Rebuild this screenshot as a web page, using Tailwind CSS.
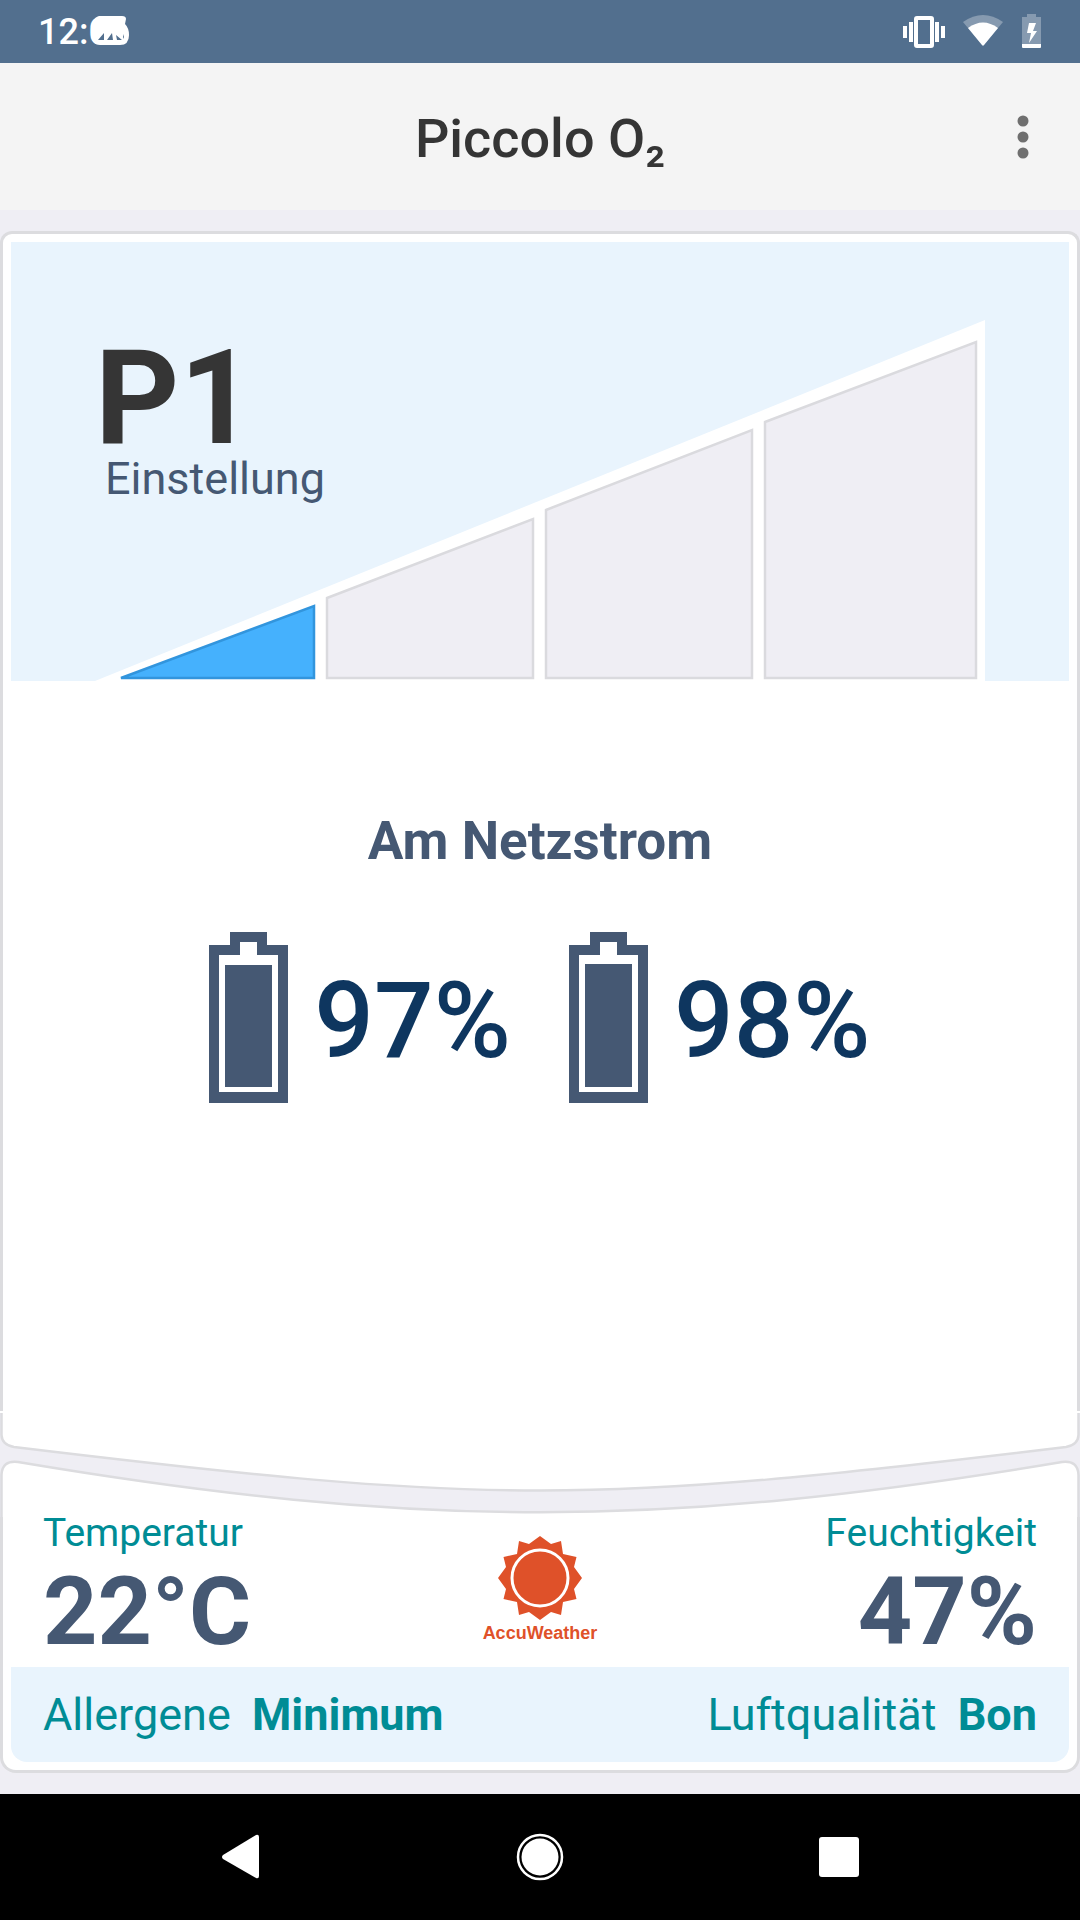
<!DOCTYPE html>
<html lang="de"><head>
<meta charset="utf-8"/>
<meta content="width=device-width, initial-scale=1.0" name="viewport"/>
<title>Piccolo O₂</title>
<script src="https://cdn.jsdelivr.net/npm/@tailwindcss/browser@4"></script>
<style>
        body {
            font-family: Roboto, sans-serif;
        }
    </style>
</head>
<body class="bg-[#efeef4] min-h-screen flex flex-col">

<!-- Status bar -->
<div class="h-[63px] shrink-0 bg-[#526f8e] text-white flex items-center justify-between pl-[38px] pr-[38px]">
<div class="relative text-[36px] leading-[64px] pt-px font-medium">
12:06
<svg class="absolute left-[52px] top-[15px] w-10 h-8" viewBox="0 0 40 32">
<path d="M9 2H32Q36 2 36 5L35 10Q39 14 39 21Q39 31 30 31H10Q1 31 1 18Q1 4 9 2Z" fill="#fff"/>
<path d="M14 19V26H8ZM22 19L23 26H17ZM26 21L32 26H27ZM34 20V25L33 23Z" fill="#526f8e"/>
</svg>
</div>
<div class="flex items-center">
<svg class="w-11 h-9" viewBox="0 0 44 36" fill="currentColor">
<rect x="1" y="12" width="4" height="12"/><rect x="7" y="8" width="4" height="20"/>
<rect x="33" y="8" width="4" height="20"/><rect x="39" y="12" width="4" height="12"/>
<rect x="14" y="4" width="16" height="28" rx="1" fill="none" stroke="currentColor" stroke-width="4"/>
</svg>
<svg class="w-[42px] h-9 ml-4" viewBox="0 0 42 36" fill="currentColor">
<path d="M1 8Q21 -6 41 8L21 32Z" opacity=".3"/>
<path d="M6 14Q21 3 36 14L22 31Q21 32 20 31Z"/>
</svg>
<svg class="w-5 h-9 ml-[18px]" viewBox="0 0 20 36" fill="currentColor">
<path d="M5 0H14V3H19V30H0V3H5Z" opacity=".3"/>
<path d="M0 30H19V33Q19 34 18 34H1Q0 34 0 33Z"/>
<path d="M7 9H14L11 17H15L7 29L9 19H5Z"/>
</svg>
</div>
</div>

<!-- App bar -->
<header class="h-[147px] shrink-0 bg-[#f4f4f4] grid grid-cols-[80px_1fr_80px] items-center">
<h1 class="col-start-2 text-center text-[54px] leading-[64px] pt-1 font-medium text-[#353535]">Piccolo O₂</h1>
<button type="button" aria-label="Menü" class="h-12 w-[46px] flex items-center justify-center">
<svg class="w-4 h-11" viewBox="0 0 16 44" fill="#6f6f6f">
<circle cx="8" cy="6" r="5.5"/><circle cx="8" cy="22" r="5.5"/><circle cx="8" cy="38" r="5.5"/>
</svg>
</button>
</header>

<main class="grow flex flex-col mt-[21px] mb-[21px]">
<section class="grow bg-white border-[3px] border-b-0 border-[#dcdcdf] rounded-t-xl px-2 pt-2">

<!-- Level chart -->
<div class="grid bg-[#e9f4fd]">
<svg class="col-start-1 row-start-1 w-full h-auto" viewBox="0 0 1058 439">
<path d="M84 439L974 78V439Z" fill="#fff"/>
<g fill="#efeef4" stroke="#dadade" stroke-width="2.500">
<path d="M110 436L303 364V436Z" fill="#45b1fd" stroke="#3295dd"/>
<path d="M316 356L522 277V436H316Z"/>
<path d="M535 268L741 188V436H535Z"/>
<path d="M754 180L965 100V436H754Z"/>
</g>
</svg>
<div class="col-start-1 row-start-1 pt-24 pl-[84px]">
<p class="text-[131px] leading-[120px] font-bold text-[#353535]">P1</p>
<p class="ml-[10px] text-[45px] leading-[42px] text-[#455873]">Einstellung</p>
</div>
</div>

<!-- Power -->
<h2 class="mt-32 text-center text-[53px] leading-[64px] font-bold text-[#455873]">Am Netzstrom</h2>
<div class="mt-[59px] flex justify-center gap-[58px] text-[105px] leading-[160px] font-medium text-[#0e365f]">
<div class="flex items-center gap-[26px]">
<svg class="w-[79px] h-[171px]" viewBox="0 0 79 171" fill="#455873">
<path fill-rule="evenodd" d="M21 0H58V13H79V171H0V13H21ZM31 10V23H10V160H69V23H48V10Z"/>
<rect x="16" y="33" width="47" height="122"/>
</svg>
<span class="pt-2">97%</span>
</div>
<div class="flex items-center gap-[26px]">
<svg class="w-[79px] h-[171px]" viewBox="0 0 79 171" fill="#455873">
<path fill-rule="evenodd" d="M21 0H58V13H79V171H0V13H21ZM31 10V23H10V160H69V23H48V10Z"/>
<rect x="16" y="32" width="47" height="123"/>
</svg>
<span class="pt-2">98%</span>
</div>
</div>
</section>

<!-- Curved gap between the two cards -->
<svg class="w-full h-[106px] shrink-0 block" viewBox="0 0 1080 106" preserveAspectRatio="none" fill="#fff" stroke="#dcdcdf" stroke-width="2.500">
<path d="M1.500 -4V24Q2 34 14 36C494 94 586 94 1066 36Q1078 34 1078.500 24V-4Z"/>
<path d="M1.500 110V64Q2 49 18 51C418 118 662 118 1062 51Q1078 49 1078.500 64V110Z"/>
<path d="M0 1H1080" stroke="#fff" stroke-width="2"/>
</svg>

<!-- Weather -->
<section class="bg-white border-[3px] border-t-0 border-[#dcdcdf] rounded-b-2xl px-2 pb-2">
<div class="grid grid-cols-3 px-8">
<div>
<p class="text-[39px] leading-8 text-[#008c95]">Temperatur</p>
<p class="mt-[15px] mb-[7px] text-[95px] leading-[96px] font-bold text-[#455873]">22°C</p>
</div>
<div class="flex flex-col items-center pt-[18px] text-[#df5129]">
<svg class="w-[86px] h-[86px]" viewBox="-43 -43 86 86" fill="currentColor">
<path d="M0 -42L11 -34L21 -37L23 -24L36.500 -21L34 -11L42 0L34 11L36.500 21L23 24L21 37L11 34L0 42L-11 34L-21 37L-23 24L-36.500 21L-34 11L-42 0L-34 -11L-36.500 -21L-23 -24L-21 -37L-11 -34Z"/>
<circle r="28" fill="none" stroke="#fff" stroke-width="3"/>
</svg>
<p class="font-['Liberation_Sans',sans-serif] font-bold text-[18px] leading-6">AccuWeather</p>
</div>
<div class="text-right">
<p class="text-[39px] leading-8 text-[#008c95]">Feuchtigkeit</p>
<p class="mt-[15px] mb-[7px] text-[95px] leading-[96px] font-bold text-[#455873]">47%</p>
</div>
</div>
<div class="h-[95px] px-8 flex items-center justify-between bg-[#e9f4fd] rounded-b-2xl text-[45px] text-[#008c95]">
<p>Allergene <b class="ml-[10px]">Minimum</b></p>
<p>Luftqualität <b class="ml-[10px]">Bon</b></p>
</div>
</section>
</main>

<!-- Navigation bar -->
<nav class="h-[126px] shrink-0 bg-black text-white flex items-center justify-center gap-[251px]">
<button type="button" aria-label="Zurück">
<svg class="w-12 h-12" viewBox="0 0 48 48" fill="currentColor"><path d="M6 22L39 2Q42 1 42 4V43Q42 46 39 45L6 26Q4 24 6 22Z"/></svg>
</button>
<button type="button" aria-label="Startseite">
<svg class="w-12 h-12" viewBox="0 0 48 48" fill="currentColor"><circle cx="24" cy="24" r="22" fill="none" stroke="currentColor" stroke-width="2.500"/><circle cx="24" cy="24" r="18.500"/></svg>
</button>
<button type="button" aria-label="Übersicht">
<svg class="w-12 h-12" viewBox="0 0 48 48" fill="currentColor"><rect x="4" y="4" width="40" height="40" rx="3"/></svg>
</button>
</nav>

</body></html>
